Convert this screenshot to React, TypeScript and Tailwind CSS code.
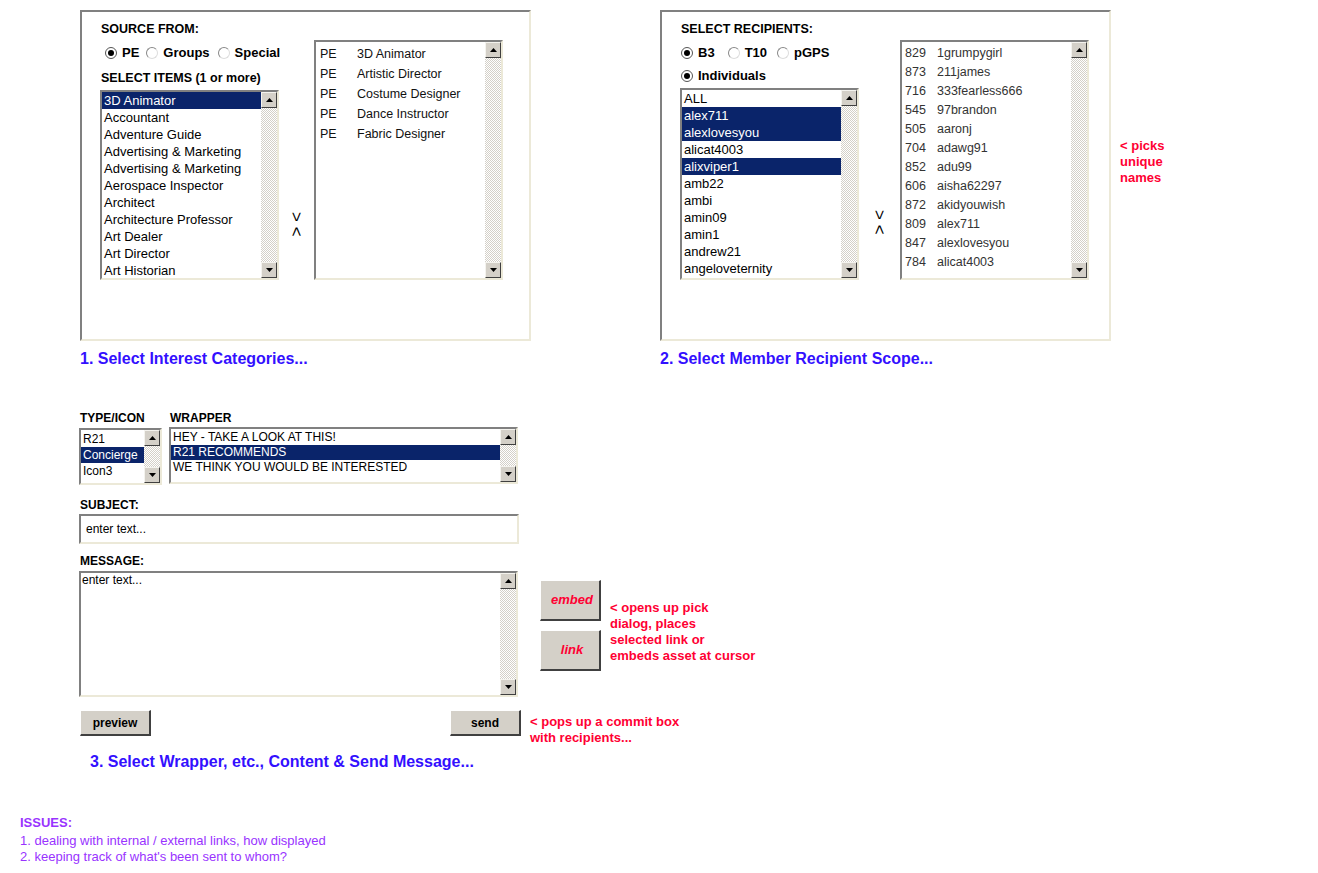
import React from 'react';

const inset =
  'border-2 border-t-[#808080] border-l-[#808080] border-r-[#ece9d8] border-b-[#ece9d8] bg-white';

const categories = [
  '3D Animator',
  'Accountant',
  'Adventure Guide',
  'Advertising & Marketing',
  'Advertising & Marketing',
  'Aerospace Inspector',
  'Architect',
  'Architecture Professor',
  'Art Dealer',
  'Art Director',
  'Art Historian',
];

const members = ['3D Animator', 'Artistic Director', 'Costume Designer', 'Dance Instructor', 'Fabric Designer'];

const people = [
  { name: 'ALL', sel: false },
  { name: 'alex711', sel: true },
  { name: 'alexlovesyou', sel: true },
  { name: 'alicat4003', sel: false },
  { name: 'alixviper1', sel: true },
  { name: 'amb22', sel: false },
  { name: 'ambi', sel: false },
  { name: 'amin09', sel: false },
  { name: 'amin1', sel: false },
  { name: 'andrew21', sel: false },
  { name: 'angeloveternity', sel: false },
];

const recipients = [
  ['829', '1grumpygirl'],
  ['873', '211james'],
  ['716', '333fearless666'],
  ['545', '97brandon'],
  ['505', 'aaronj'],
  ['704', 'adawg91'],
  ['852', 'adu99'],
  ['606', 'aisha62297'],
  ['872', 'akidyouwish'],
  ['809', 'alex711'],
  ['847', 'alexlovesyou'],
  ['784', 'alicat4003'],
];

const ScrollButton: React.FC<{ down?: boolean }> = ({ down }) => (
  <div className="flex h-4 w-4 shrink-0 items-center justify-center border border-t-[#f4f3ee] border-l-[#f4f3ee] border-r-[#404040] border-b-[#404040] bg-[#d4d0c8]">
    <svg width="7" height="4" viewBox="0 0 7 4">
      {down ? <polygon points="0,0 7,0 3.5,4" fill="#000" /> : <polygon points="3.5,0 7,4 0,4" fill="#000" />}
    </svg>
  </div>
);

const Scrollbar = () => (
  <div className="flex w-4 shrink-0 flex-col">
    <ScrollButton />
    <div className="flex-1 bg-[image:repeating-conic-gradient(#d4d0c8_0_25%,#ffffff_0_50%)] bg-[length:2px_2px]" />
    <ScrollButton down />
  </div>
);

const Radio: React.FC<{ checked?: boolean; label: string; className?: string }> = ({ checked, label, className }) => (
  <div className={`flex items-center ${className ?? ''}`}>
    <span
      className={`flex h-3 w-3 items-center justify-center rounded-full border bg-white ${
        checked ? 'border-[#555]' : 'border-t-[#888] border-l-[#888] border-r-[#ddd] border-b-[#ddd]'
      }`}
    >
      {checked && <span className="h-1.5 w-1.5 rounded-full bg-black" />}
    </span>
    <span className="ml-[5px] text-[13px] font-bold leading-4 text-black">{label}</span>
  </div>
);

const Arrows = () => (
  <span className="text-[17px] leading-none text-black [writing-mode:vertical-rl]">&gt; &lt;</span>
);

const Heading: React.FC<{ children: React.ReactNode; className?: string }> = ({ children, className }) => (
  <div className={`h-4 text-[12.5px] font-bold leading-4 text-black ${className ?? ''}`}>{children}</div>
);

const WinButton: React.FC<{ children: React.ReactNode; className?: string }> = ({ children, className }) => (
  <div
    className={`flex items-center justify-center border-t border-l border-r-2 border-b-2 border-t-[#ffffff] border-l-[#ffffff] border-r-[#404040] border-b-[#404040] bg-[#d4d0c8] ${
      className ?? ''
    }`}
  >
    {children}
  </div>
);

export default function App() {
  return (
    <div className="min-h-[873px] w-[1318px] bg-white font-['Liberation_Sans',Arial,sans-serif] text-black">
      {/* top panels */}
      <div className="flex items-start pl-[80px] pt-[10px]">
        {/* panel 1 */}
        <div className="w-[451px]">
          <div className="flex h-[331px] border-2 border-t-[#808080] border-l-[#808080] border-r-[#ece9d8] border-b-[#ece9d8] pl-[18px] pt-[9px]">
            <div className="w-[179px]">
              <Heading className="pl-px">SOURCE FROM:</Heading>
              <div className="mt-2 flex pl-[5px]">
                <Radio checked label="PE" />
                <Radio label="Groups" className="ml-[7px]" />
                <Radio label="Special" className="ml-2" />
              </div>
              <Heading className="mt-[9px] pl-px">SELECT ITEMS (1 or more)</Heading>
              <div className={`mt-1 flex h-[190px] ${inset}`}>
                <div className="flex-1 overflow-hidden">
                  {categories.map((c, i) => (
                    <div
                      key={i}
                      className={`h-[17px] whitespace-nowrap pl-0.5 text-[13px] leading-[17px] ${
                        i === 0 ? 'bg-[#0a246a] text-white' : 'text-black'
                      }`}
                    >
                      {c}
                    </div>
                  ))}
                </div>
                <Scrollbar />
              </div>
            </div>
            <div className="flex w-[35px] justify-center pt-[191px]">
              <Arrows />
            </div>
            <div className={`mt-[19px] flex h-[240px] w-[189px] ${inset}`}>
              <div className="flex-1 overflow-hidden pl-1 pt-0.5">
                {members.map((m) => (
                  <div key={m} className="flex h-5 items-center text-[12.5px] text-[#111]">
                    <span className="w-[37px]">PE</span>
                    <span>{m}</span>
                  </div>
                ))}
              </div>
              <Scrollbar />
            </div>
          </div>
          <div className="mt-2 text-[16px] font-bold leading-5 text-[#3310ff]">1. Select Interest Categories...</div>
        </div>

        {/* panel 2 */}
        <div className="ml-[129px] w-[451px]">
          <div className="flex h-[331px] border-2 border-t-[#808080] border-l-[#808080] border-r-[#ece9d8] border-b-[#ece9d8] pl-[18px] pt-[9px]">
            <div className="w-[179px]">
              <Heading className="pl-px">SELECT RECIPIENTS:</Heading>
              <div className="mt-2 flex pl-px">
                <Radio checked label="B3" />
                <Radio label="T10" className="ml-[13px]" />
                <Radio label="pGPS" className="ml-[10px]" />
              </div>
              <div className="mt-[7px] pl-px">
                <Radio checked label="Individuals" />
              </div>
              <div className={`mt-1 flex h-[192px] ${inset}`}>
                <div className="flex-1 overflow-hidden">
                  {people.map((p) => (
                    <div
                      key={p.name}
                      className={`h-[17px] whitespace-nowrap pl-0.5 text-[13px] leading-[17px] ${
                        p.sel ? 'bg-[#0a246a] text-white' : 'text-black'
                      }`}
                    >
                      {p.name}
                    </div>
                  ))}
                </div>
                <Scrollbar />
              </div>
            </div>
            <div className="flex w-[41px] justify-center pt-[189px]">
              <Arrows />
            </div>
            <div className={`mt-[19px] flex h-[240px] w-[189px] ${inset}`}>
              <div className="flex-1 overflow-hidden pl-[3px] pt-0.5">
                {recipients.map(([n, name]) => (
                  <div key={n} className="flex h-[19px] items-center whitespace-nowrap text-[12.5px] text-[#333]">
                    <span className="w-8">{n}</span>
                    <span>{name}</span>
                  </div>
                ))}
              </div>
              <Scrollbar />
            </div>
          </div>
          <div className="mt-2 text-[16px] font-bold leading-5 text-[#3310ff]">2. Select Member Recipient Scope...</div>
        </div>

        <div className="ml-[9px] mt-[128px] text-[13px] font-bold leading-4 text-[#ff0033]">
          &lt; picks
          <br />
          unique
          <br />
          names
        </div>
      </div>

      {/* message composer */}
      <div className="mt-[41px] pl-[79px]">
        <div className="flex items-start">
          <div className="w-[83px]">
            <Heading className="pl-px text-[12px]">TYPE/ICON</Heading>
            <div className={`mt-0.5 flex h-[57px] ${inset}`}>
              <div className="flex-1 overflow-hidden pt-px">
                {['R21', 'Concierge', 'Icon3'].map((t) => (
                  <div
                    key={t}
                    className={`h-4 pl-0.5 text-[12px] leading-4 ${t === 'Concierge' ? 'bg-[#0a246a] text-white' : 'text-black'}`}
                  >
                    {t}
                  </div>
                ))}
              </div>
              <Scrollbar />
            </div>
          </div>
          <div className="ml-[7px] w-[349px]">
            <Heading className="pl-px text-[12px]">WRAPPER</Heading>
            <div className={`mt-px flex h-[57px] ${inset}`}>
              <div className="flex-1 overflow-hidden pt-px">
                {['HEY - TAKE A LOOK AT THIS!', 'R21 RECOMMENDS', 'WE THINK YOU WOULD BE INTERESTED'].map((w) => (
                  <div
                    key={w}
                    className={`h-[15px] whitespace-nowrap pl-0.5 text-[12px] leading-[15px] ${
                      w === 'R21 RECOMMENDS' ? 'bg-[#0a246a] text-white' : 'text-black'
                    }`}
                  >
                    {w}
                  </div>
                ))}
              </div>
              <Scrollbar />
            </div>
          </div>
        </div>

        <Heading className="mt-3 pl-px text-[12px]">SUBJECT:</Heading>
        <div className={`mt-px flex h-[30px] w-[440px] items-center pl-[5px] text-[12px] text-black ${inset}`}>
          enter text...
        </div>

        <Heading className="mt-[9px] pl-px text-[12px]">MESSAGE:</Heading>
        <div className="mt-0.5 flex items-start">
          <div className={`flex h-[126px] w-[439px] ${inset}`}>
            <div className="flex-1 pl-px text-[12px] leading-[15px] text-black">enter text...</div>
            <Scrollbar />
          </div>
          <div className="ml-[22px] flex flex-col gap-[9px] pt-[9px]">
            <WinButton className="h-[41px] w-[61px] pl-1">
              <span className="text-[13px] font-bold italic text-[#ff0033]">embed</span>
            </WinButton>
            <WinButton className="h-[41px] w-[61px] pl-1">
              <span className="text-[13px] font-bold italic text-[#ff0033]">link</span>
            </WinButton>
          </div>
          <div className="ml-[9px] mt-[29px] text-[13px] font-bold leading-4 text-[#ff0033]">
            &lt; opens up pick
            <br />
            dialog, places
            <br />
            selected link or
            <br />
            embeds asset at cursor
          </div>
        </div>

        <div className="mt-[13px] flex items-start">
          <WinButton className="ml-px h-[26px] w-[71px]">
            <span className="text-[12px] font-bold text-black">preview</span>
          </WinButton>
          <WinButton className="ml-[299px] h-[26px] w-[71px]">
            <span className="text-[12px] font-bold text-black">send</span>
          </WinButton>
          <div className="ml-[9px] mt-1 text-[13px] font-bold leading-4 text-[#ff0033]">
            &lt; pops up a commit box
            <br />
            with recipients...
          </div>
        </div>

        <div className="mt-[6px] pl-[11px] text-[16px] font-bold leading-5 text-[#3310ff]">
          3. Select Wrapper, etc., Content &amp; Send Message...
        </div>
      </div>

      {/* issues */}
      <div className="mt-[43px] pl-5 text-[13px] leading-4 text-[#9933ff]">
        <div className="font-bold">ISSUES:</div>
        <div className="mt-0.5">1. dealing with internal / external links, how displayed</div>
        <div>2. keeping track of what&apos;s been sent to whom?</div>
      </div>
    </div>
  );
}
